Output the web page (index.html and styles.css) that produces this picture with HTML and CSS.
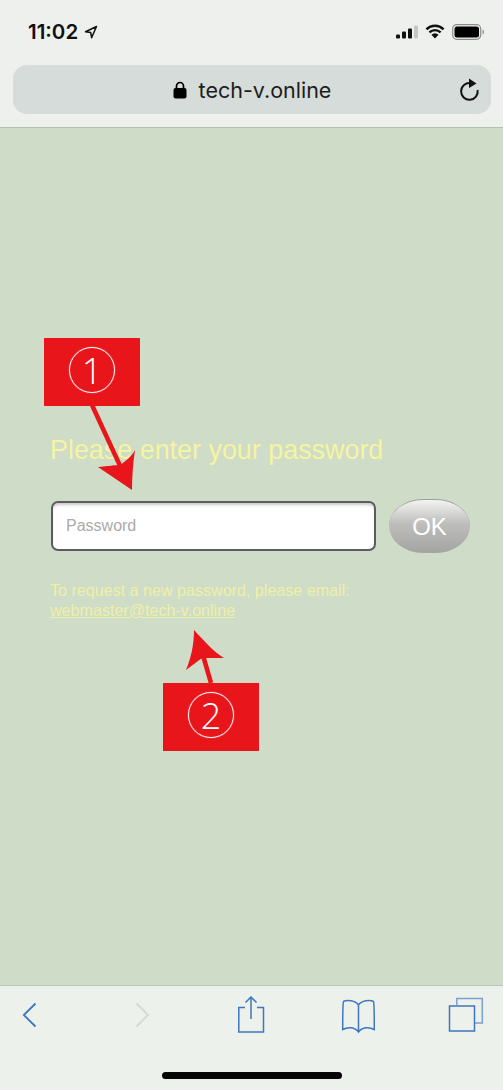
FILE: index.html
```html
<!DOCTYPE html>
<html lang="en">
<head>
    <meta charset="UTF-8">
    <meta name="viewport" content="width=device-width, initial-scale=1.0">
    <title>tech-v.online</title>
    <link rel="stylesheet" href="styles.css">
</head>
<body>
    <div class="page">

        <div class="top-bar">
            <div class="status-row">
                <div class="status-left">
                    <span class="clock">11:02</span>
                    <svg class="location" width="14" height="14" viewBox="0 0 14 14"><path d="M12.500 1.500 1.500 6.800l5.200.7.900 5.200z" fill="none" stroke="#111" stroke-width="1.500" stroke-linejoin="round"/></svg>
                </div>
                <div class="status-right">
                    <svg width="22" height="14" viewBox="0 0 22 14">
                        <rect x="0" y="9.500" width="4" height="4" rx="1" fill="#111"/>
                        <rect x="6" y="6.500" width="4" height="7" rx="1" fill="#111"/>
                        <rect x="12" y="3.500" width="4" height="10" rx="1" fill="#111"/>
                        <rect x="18" y="0.500" width="4" height="13" rx="1" fill="#c4c6c4"/>
                    </svg>
                    <svg width="20" height="15" viewBox="0 0 21 15">
                        <path d="M1.500 5.200a13 13 0 0 1 18 0M4.600 8.400a8.600 8.600 0 0 1 11.800 0" fill="none" stroke="#111" stroke-width="2.600"/>
                        <path d="M6.800 11a4.800 4.800 0 0 1 7.400 0l-3.700 3.900z" fill="#111"/>
                    </svg>
                    <svg width="32" height="16" viewBox="0 0 32 16">
                        <rect x="0.700" y="0.700" width="28" height="14.600" rx="4" fill="none" stroke="#8c8e8c" stroke-width="1.200"/>
                        <rect x="2.500" y="2.500" width="24.500" height="11" rx="2.500" fill="#000"/>
                        <path d="M30.500 5.500c1 .4 1.500 1.200 1.500 2.500s-.5 2.100-1.500 2.500z" fill="#8c8e8c"/>
                    </svg>
                </div>
            </div>
            <div class="address-bar">
                <svg class="lock" width="14" height="18" viewBox="0 0 14 18">
                    <path d="M3.500 8V5a3.500 3.500 0 0 1 7 0v3" fill="none" stroke="#000" stroke-width="1.700"/>
                    <rect x="0.500" y="7" width="13" height="10.500" rx="2" fill="#000"/>
                </svg>
                <span class="address-text">tech-v.online</span>
                <svg class="reload" width="22" height="24" viewBox="0 0 22 24">
                    <path d="M12.500 5.200A8.300 8.300 0 1 0 19.600 12" fill="none" stroke="#111" stroke-width="2"/>
                    <path d="M11 .5l7.500 5-7.500 4.500z" fill="#111"/>
                </svg>
            </div>
        </div>

        <div class="content">
            <div class="login-title">Please enter your password</div>
            <div class="login-row">
                <input class="password-input" type="password" placeholder="Password">
                <button class="ok-button">OK</button>
            </div>
            <div class="help-text">
                To request a new password, please email:<br>
                <a class="help-link" href="#">webmaster@tech-v.online</a>
            </div>
        </div>

        <div class="bottom-bar">
            <div class="toolbar">
                <svg width="36" height="38" viewBox="0 0 36 38"><path d="M24.500 7.500 12.800 19l11.700 11.500" fill="none" stroke="#3f76bd" stroke-width="1.800"/></svg>
                <svg width="36" height="38" viewBox="0 0 36 38"><path d="M16.500 7.500 28 19 16.500 30.500" fill="none" stroke="#d5d9d6" stroke-width="1.800"/></svg>
                <svg width="36" height="38" viewBox="0 0 36 38">
                    <path d="M15 11.500H8.800v24.500h24.700V11.500H27" fill="none" stroke="#3f76bd" stroke-width="1.500"/>
                    <path d="M21 23V1.500M15.500 6.500 21 1l5.500 5.500" fill="none" stroke="#3f76bd" stroke-width="1.500"/>
                </svg>
                <svg width="36" height="38" viewBox="0 0 36 38">
                    <path d="M19.500 9C16.500 4.500 8 3.500 4.500 5.500 3.700 7 3.700 12 3.700 33.500c5-2.800 12-2.800 15.800 2.500 3.800-5.300 10.800-5.300 15.800-2.500 0-21.500 0-26.500-.8-28C31 3.500 22.500 4.500 19.500 9zM19.500 9v27" fill="none" stroke="#3f76bd" stroke-width="1.500"/>
                </svg>
                <svg width="36" height="38" viewBox="0 0 36 38">
                    <path d="M8.800 9V2.500h25.500V27H27" fill="none" stroke="#7ba0d2" stroke-width="1.500"/>
                    <rect x="1.500" y="10" width="25" height="25" fill="none" stroke="#3f76bd" stroke-width="1.500"/>
                </svg>
            </div>
            <div class="home-bar"></div>
        </div>

        <!-- annotations over the page -->
        <svg class="arrows" width="503" height="1090" viewBox="0 0 503 1090">
            <path d="M92 405 122 470" stroke="#e8151b" stroke-width="4.500" fill="none"/>
            <path d="M132 490 98 467C108 466 116 465 120 465 126 461 132 456 135 450 133 463 132 477 132 490z" fill="#e8151b"/>
            <path d="M211 683 202 652" stroke="#e8151b" stroke-width="4.500" fill="none"/>
            <path d="M194 630C205 642 214 652 224 658L202 658 186 670C191 658 194 645 194 630z" fill="#e8151b"/>
        </svg>
        <div class="callout callout-one"><span class="callout-number">1</span></div>
        <div class="callout callout-two"><span class="callout-number">2</span></div>
    </div>
</body>
</html>
```

FILE: styles.css
```css
body {
    margin: 0;
    font-family: "Liberation Sans", Arial, sans-serif;
    overflow: hidden;
}
.page {
    position: relative;
    width: 503px;
    height: 1090px;
    display: flex;
    flex-direction: column;
    background-color: #cedcc8;
}
.top-bar {
    height: 128px;
    box-sizing: border-box;
    background-color: #eef0ee;
    border-bottom: 1px solid #b3bfb0;
    padding: 0 12px 0 13px;
}
.status-row {
    height: 65px;
    display: flex;
    align-items: center;
    justify-content: space-between;
    padding: 0 7px 2px 15px;
    box-sizing: border-box;
}
.status-left {
    display: flex;
    align-items: center;
    gap: 6px;
}
.clock {
    font-family: Inter, sans-serif;
    font-size: 20.500px;
    font-weight: 600;
    color: #111;
}
.status-right {
    display: flex;
    align-items: center;
    gap: 7px;
}
.address-bar {
    position: relative;
    height: 49px;
    border-radius: 14px;
    background-color: #d6dcda;
    display: flex;
    align-items: center;
    justify-content: center;
    gap: 12px;
}
.address-text {
    font-family: Inter, sans-serif;
    font-size: 21.500px;
    color: #1c1c1c;
}
.reload {
    position: absolute;
    right: 11px;
    top: 13px;
}
.content {
    flex: 1;
    padding: 306px 33px 0 50px;
    color: #f5f4a0;
}
.login-title {
    font-size: 26.900px;
    line-height: 32px;
}
.login-row {
    display: flex;
    align-items: center;
    justify-content: space-between;
    margin: 33px 0 0 1px;
}
.password-input {
    width: 325px;
    height: 50px;
    box-sizing: border-box;
    padding: 0 13px;
    border: 2px solid #5c5e5c;
    border-radius: 7px;
    background-color: #fff;
    box-shadow: inset 0 3px 3px -1px #c8c8c8;
    font-family: "Liberation Sans", Arial, sans-serif;
    font-size: 16px;
}
.password-input::placeholder {
    color: #aaa;
}
.ok-button {
    width: 81px;
    height: 54px;
    padding: 0;
    border: none;
    border-top: 1px solid #9aa297;
    border-radius: 34px / 27px;
    background: linear-gradient(#f4f4f2, #bdbebc 45%, #a4a5a3);
    color: #fff;
    font-family: "Liberation Sans", Arial, sans-serif;
    font-size: 24px;
}
.help-text {
    margin-top: 27px;
    font-size: 16.100px;
    line-height: 20px;
    color: #eff0a6;
}
.help-link {
    color: #eff0a6;
}
.bottom-bar {
    height: 105px;
    box-sizing: border-box;
    background-color: #ecf1eb;
    border-top: 1px solid #bcc5b9;
}
.toolbar {
    height: 58px;
    display: flex;
    align-items: center;
    justify-content: space-between;
    padding: 0 19px 0 11px;
}
.home-bar {
    width: 180px;
    height: 7px;
    margin: 28px auto 0;
    border-radius: 4px;
    background-color: #050505;
}
.arrows {
    position: absolute;
    top: 0;
    left: 0;
    pointer-events: none;
}
.callout {
    position: absolute;
    width: 96px;
    height: 68px;
    display: flex;
    align-items: center;
    justify-content: center;
    background-color: #e8151b;
}
.callout-one {
    left: 44px;
    top: 338px;
}
.callout-two {
    left: 163px;
    top: 683px;
}
.callout-number {
    width: 46px;
    height: 46px;
    margin-bottom: 4px;
    box-sizing: border-box;
    border: 1px solid #fff;
    box-shadow: 0 0 1px #fff;
    border-radius: 50%;
    display: flex;
    align-items: center;
    justify-content: center;
    color: #fff;
    font-family: "Open Sans", sans-serif;
    font-size: 36px;
    font-weight: 300;
}
```
